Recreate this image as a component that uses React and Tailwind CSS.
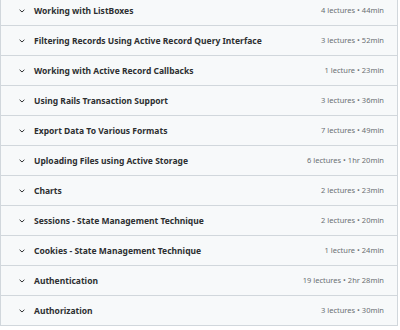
import React from 'react';

const sections = [
  { title: 'Working with ListBoxes', meta: '4 lectures • 44min' },
  { title: 'Filtering Records Using Active Record Query Interface', meta: '3 lectures • 52min' },
  { title: 'Working with Active Record Callbacks', meta: '1 lecture • 23min' },
  { title: 'Using Rails Transaction Support', meta: '3 lectures • 36min' },
  { title: 'Export Data To Various Formats', meta: '7 lectures • 49min' },
  { title: 'Uploading Files using Active Storage', meta: '6 lectures • 1hr 20min' },
  { title: 'Charts', meta: '2 lectures • 23min' },
  { title: 'Sessions - State Management Technique', meta: '2 lectures • 20min' },
  { title: 'Cookies - State Management Technique', meta: '1 lecture • 24min' },
  { title: 'Authentication', meta: '19 lectures • 2hr 28min' },
  { title: 'Authorization', meta: '3 lectures • 30min' },
];

function Chevron() {
  return (
    <svg width="6" height="4" viewBox="0 0 6 4" className="shrink-0">
      <path d="M0.6 0.8 L3 3 L5.4 0.8" fill="none" stroke="#2d2f31" strokeWidth="1" />
    </svg>
  );
}

export default function App() {
  return (
    <div className="w-[400px] h-[330px] overflow-hidden bg-white" style={{ fontFamily: '"Noto Sans", sans-serif' }}>
      <div className="w-[398px] -mt-[4px] border-x border-[#d1d7dc]">
        {sections.map((s) => (
          <div
            key={s.title}
            className="h-[30px] flex items-center bg-[#f7f9fa] border-b border-[#d1d7dc] pl-[18px] pr-[13px] pt-[1px]"
          >
            <Chevron />
            <span className="ml-[9px] text-[8.5px] font-bold text-[#2d2f31] leading-none">{s.title}</span>
            <span className="ml-auto text-[7.5px] text-[#6a6f73] leading-none">{s.meta}</span>
          </div>
        ))}
      </div>
    </div>
  );
}
